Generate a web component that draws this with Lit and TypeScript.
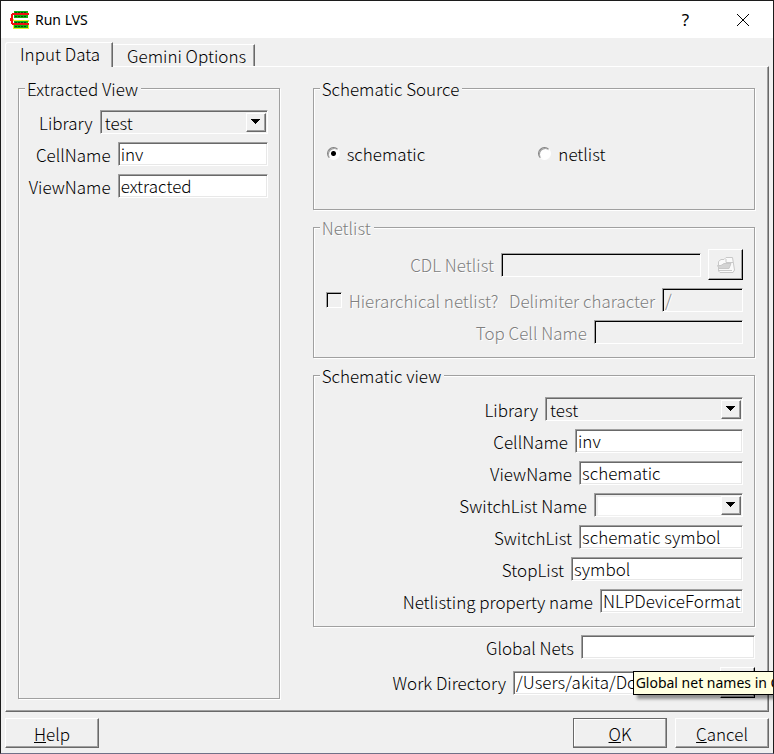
import { LitElement, html, css, svg } from "lit";
import { customElement, property, state } from "lit/decorators.js";
import { classMap } from "lit/directives/class-map.js";

@customElement("text-row")
class TextRow extends LitElement {
  @property() label = "";
  @property() value = "";
  @property({ type: Number }) size = 164;
  @property({ type: Boolean }) disabled = false;

  static styles = css`
    :host {
      display: flex;
      align-items: center;
      justify-content: flex-end;
      gap: 7px;
      min-height: 24px;
    }
    label {
      white-space: nowrap;
    }
    input {
      box-sizing: border-box;
      flex: none;
      height: 24px;
      margin: 0;
      padding: 0 1px 2px 2px;
      border: 1px solid;
      border-color: #a0a0a0 #fff #fff #a0a0a0;
      border-radius: 0;
      box-shadow: inset 1px 1px 0 #696969, inset -1px -1px 0 #e8e8e8;
      background: #fff;
      color: #000;
      font: inherit;
      outline: none;
    }
    .off {
      color: #808080;
      text-shadow: 1px 1px 0 #fff;
    }
    input.off {
      background: #f0f0f0;
      box-shadow: inset 1px 1px 0 #000;
    }
  `;

  render() {
    return html`
      <label for="field" class=${classMap({ off: this.disabled })}>${this.label}</label>
      <input
        id="field"
        type="text"
        class=${classMap({ off: this.disabled })}
        style="width:${this.size}px"
        .value=${this.value}
        ?disabled=${this.disabled}
      />
      <slot></slot>
    `;
  }
}

@customElement("combo-row")
class ComboRow extends LitElement {
  @property() label = "";
  @property() value = "";
  @property({ type: Number }) size = 164;
  @property({ type: Boolean }) editable = false;

  static styles = css`
    :host {
      display: flex;
      align-items: center;
      justify-content: flex-end;
      gap: 7px;
      min-height: 24px;
    }
    label {
      white-space: nowrap;
    }
    .combo {
      position: relative;
      box-sizing: border-box;
      height: 24px;
      border: 1px solid;
      border-color: #a0a0a0 #fff #fff #a0a0a0;
      box-shadow: inset 1px 1px 0 #696969;
      padding: 3px 1px 1px 3px;
    }
    select {
      appearance: none;
      display: block;
      box-sizing: border-box;
      width: 100%;
      height: 100%;
      margin: 0;
      padding: 0 20px 0 1px;
      border: 0;
      border-radius: 0;
      background: #f0f0f0;
      color: #000;
      font: inherit;
      line-height: 18px;
      outline: none;
    }
    .white {
      background: #fff;
    }
    .drop {
      position: absolute;
      top: 2px;
      right: 1px;
      box-sizing: border-box;
      width: 20px;
      height: 19px;
      border: 1px solid;
      border-color: #fff #696969 #696969 #fff;
      box-shadow: inset -1px -1px 0 #a0a0a0;
      background: #f0f0f0;
      pointer-events: none;
    }
    .drop svg {
      display: block;
      margin: 5px 0 0 4px;
    }
  `;

  render() {
    return html`
      <label for="field">${this.label}</label>
      <div class="combo" style="width:${this.size}px">
        <select id="field" class=${classMap({ white: this.editable })}>
          <option>${this.value}</option>
        </select>
        <span class="drop">
          <svg width="9" height="5" shape-rendering="crispEdges"><path d="M0 0H9L4.500 5Z" /></svg>
        </span>
      </div>
    `;
  }
}

const chipIcon = svg`
  <g shape-rendering="crispEdges">
    <path fill="#12b312" d="M4 1h14v3H4zM4 5h14v3H4zM4 11h14v3H4zM4 15h14v3H4z" />
    <path fill="#e6f02a" d="M3 9h1v2H3zM4 10h14v1H4zM3 15h1v4H3zM18 15h1v4h-1zM4 18h14v1H4zM18 10h1v2h-1z" />
    <path
      fill="#0a4a0a"
      d="M5 2h2v1H5zM8 2h2v1H8zM11 2h2v1h-2zM14 2h2v1h-2zM5 6h2v1H5zM8 6h2v1H8zM11 6h2v1h-2zM14 6h2v1h-2zM5 12h2v1H5zM8 12h2v1H8zM11 12h2v1h-2zM14 12h2v1h-2zM5 16h2v1H5zM8 16h2v1H8zM11 16h2v1h-2zM14 16h2v1h-2z"
    />
    <path fill="#f01010" d="M2 3h17v2H3v8h16v2H2v-1H1v-3H0V8h1V4h1z" />
  </g>
`;

@customElement("app-root")
class AppRoot extends LitElement {
  @state() private source = "schematic";

  static styles = css`
    :host {
      display: flex;
      flex-direction: column;
      box-sizing: border-box;
      min-height: 100vh;
      overflow: hidden;
      border: 1px solid #1c1c1c;
      border-bottom-color: #707088;
      background: #f0f0f0;
      color: #000;
      font: 300 17px/19px "Noto Sans CJK JP", sans-serif;
    }
    .title {
      display: flex;
      align-items: center;
      height: 37px;
      background: #fff;
      padding: 0 2px 0 9px;
      font: 400 14px/20px "Noto Sans", sans-serif;
    }
    .title h1 {
      flex: 1;
      margin: 0;
      padding-left: 5px;
      font: inherit;
    }
    .title button {
      width: 57px;
      height: 37px;
      padding: 0;
      border: 0;
      background: none;
      font: 400 17px/20px "Noto Sans", sans-serif;
    }
    .tabs {
      display: flex;
      align-items: flex-end;
      padding: 4px 4px 0;
    }
    .tab {
      box-sizing: border-box;
      height: 22px;
      margin: 0;
      padding: 0 8px 0 14px;
      border: 0;
      border-top: 1px solid #fff;
      border-right: 1px solid #696969;
      box-shadow: inset -1px 0 0 #a0a0a0;
      background: none;
      color: inherit;
      font: inherit;
      line-height: 21px;
    }
    .tab.on {
      z-index: 1;
      height: 25px;
      margin-bottom: -1px;
      padding: 0 12px 3px 14px;
      border-left: 1px solid #fff;
      border-top-left-radius: 3px;
      background: #f0f0f0;
    }
    .panel {
      flex: 1;
      display: grid;
      grid-template-columns: 262fr 443fr;
      gap: 33px;
      margin: 0 4px;
      padding: 12px 13px 12px 12px;
      border: 1px solid;
      border-color: #fff #696969 #696969 #fff;
      box-shadow: inset -1px -1px 0 #a0a0a0;
    }
    .side {
      display: flex;
      flex-direction: column;
      gap: 8px;
      min-width: 0;
    }
    fieldset {
      box-sizing: border-box;
      min-width: 0;
      margin: 0;
      padding: 12px 11px 13px 6px;
      border: 1px solid #a0a0a0;
      box-shadow: inset 1px 1px 0 #fff, 1px 1px 0 #fff;
    }
    fieldset.tall {
      flex: 1;
    }
    legend {
      margin: 0;
      padding: 0 3px 0 2px;
      background: #f0f0f0;
    }
    .off {
      color: #808080;
      text-shadow: 1px 1px 0 #fff;
    }
    .rows {
      display: flex;
      flex-direction: column;
      gap: 8px;
    }
    .radios {
      display: grid;
      grid-template-columns: 1fr 1fr;
      gap: 7px;
      align-items: center;
      height: 86px;
      padding-left: 7px;
    }
    .radios label,
    .check {
      display: flex;
      align-items: center;
      gap: 7px;
      white-space: nowrap;
    }
    input[type="radio"] {
      appearance: none;
      box-sizing: border-box;
      width: 13px;
      height: 13px;
      margin: 0;
      border: 1px solid;
      border-color: #808080 #fff #fff #808080;
      border-radius: 50%;
      background: #fff;
      box-shadow: inset 1px 1px 0 #a0a0a0;
    }
    input[type="radio"]:checked {
      background: radial-gradient(circle at center, #000 0 2px, #fff 3px);
    }
    input[type="checkbox"] {
      appearance: none;
      box-sizing: border-box;
      width: 16px;
      height: 16px;
      margin: 0;
      border: 1px solid;
      border-color: #a0a0a0 #fff #fff #a0a0a0;
      box-shadow: inset 1px 1px 0 #000;
    }
    .split {
      display: flex;
      justify-content: space-between;
      padding-left: 6px;
    }
    .browse {
      box-sizing: border-box;
      flex: none;
      width: 35px;
      height: 31px;
      padding: 0;
      border: 1px solid;
      border-color: #fff #000 #000 #fff;
      box-shadow: inset -1px -1px 0 #a0a0a0;
      background: #f0f0f0;
    }
    .browse svg {
      display: block;
      margin: auto;
    }
    .work {
      position: relative;
    }
    .tip {
      position: absolute;
      top: 4px;
      left: 320px;
      box-sizing: border-box;
      width: 240px;
      height: 24px;
      padding: 0 2px;
      border: 1px solid #000;
      box-shadow: 4px 4px 3px rgba(0, 0, 0, 0.4);
      background: #ffffe1;
      font: 400 14px/22px "Noto Sans", sans-serif;
      white-space: nowrap;
    }
    .foot {
      display: flex;
      gap: 8px;
      padding: 6px 4px 5px;
    }
    .foot button {
      box-sizing: border-box;
      width: 94px;
      height: 30px;
      padding: 0;
      border: 1px solid;
      border-color: #fff #696969 #696969 #fff;
      box-shadow: inset -1px -1px 0 #a0a0a0;
      background: #f0f0f0;
      color: inherit;
      font: inherit;
    }
    .foot .help {
      margin-right: auto;
    }
    .foot .main {
      border-color: #696969;
      box-shadow: inset -1px -1px 0 #a0a0a0, inset 1px 1px 0 #fff;
    }
  `;

  private folder() {
    return html`<svg width="20" height="18" viewBox="0 0 20 18" fill="none" stroke="#c8c8c8">
      <path fill="#fafafa" d="M2.500 15V5.500L5 3.500H8L10 1.500H16.500L18.500 14L17 16.500H4Z" />
      <path fill="#d4d4d4" d="M1.500 9.500H5L8 7.500H15L13 12.500H3Z" />
      <path d="M10 3V6.500H17M3 14.500H16" />
    </svg>`;
  }

  private radio(name: string) {
    return html`<label>
      <input
        type="radio"
        name="source"
        .checked=${this.source === name}
        @change=${() => (this.source = name)}
      />${name}</label
    >`;
  }

  render() {
    return html`
      <header class="title">
        <svg width="20" height="20" viewBox="0 0 20 20" aria-hidden="true">${chipIcon}</svg>
        <h1>Run LVS</h1>
        <button aria-label="Help">?</button>
        <button aria-label="Close">
          <svg width="12" height="12" stroke="#000" fill="none"><path d="M0 0L12 12M12 0L0 12" /></svg>
        </button>
      </header>
      <nav class="tabs">
        <button class="tab on">Input Data</button>
        <button class="tab">Gemini Options</button>
      </nav>
      <main class="panel">
        <div class="side">
          <fieldset class="tall">
            <legend>Extracted View</legend>
            <div class="rows">
              <combo-row label="Library" value="test" size="168"></combo-row>
              <text-row label="CellName" value="inv" size="150"></text-row>
              <text-row label="ViewName" value="extracted" size="150"></text-row>
            </div>
          </fieldset>
        </div>
        <div class="side">
          <fieldset>
            <legend>Schematic Source</legend>
            <div class="radios">${this.radio("schematic")}${this.radio("netlist")}</div>
          </fieldset>
          <fieldset>
            <legend class="off">Netlist</legend>
            <div class="rows">
              <text-row label="CDL Netlist" size="200" disabled>
                <button class="browse" disabled aria-label="Browse netlist">${this.folder()}</button>
              </text-row>
              <div class="split">
                <label class="check off"><input type="checkbox" disabled />Hierarchical netlist?</label>
                <text-row label="Delimiter character" value="/" size="81" disabled></text-row>
              </div>
              <text-row label="Top Cell Name" size="149" disabled></text-row>
            </div>
          </fieldset>
          <fieldset>
            <legend>Schematic view</legend>
            <div class="rows">
              <combo-row label="Library" value="test" size="198"></combo-row>
              <text-row label="CellName" value="inv" size="168"></text-row>
              <text-row label="ViewName" value="schematic" size="164"></text-row>
              <combo-row label="SwitchList Name" size="149" editable></combo-row>
              <text-row label="SwitchList" value="schematic symbol" size="164"></text-row>
              <text-row label="StopList" value="symbol" size="172"></text-row>
              <text-row label="Netlisting property name" value="NLPDeviceFormat" size="143"></text-row>
            </div>
          </fieldset>
          <text-row label="Global Nets" size="174"></text-row>
          <div class="work">
            <text-row label="Work Directory" value="/Users/akita/Documents" size="200">
              <button class="browse" aria-label="Browse directory">${this.folder()}</button>
            </text-row>
            <div class="tip" role="tooltip">Global net names in C</div>
          </div>
        </div>
      </main>
      <footer class="foot">
        <button class="help"><u>H</u>elp</button>
        <button class="main"><u>O</u>K</button>
        <button><u>C</u>ancel</button>
      </footer>
    `;
  }
}
